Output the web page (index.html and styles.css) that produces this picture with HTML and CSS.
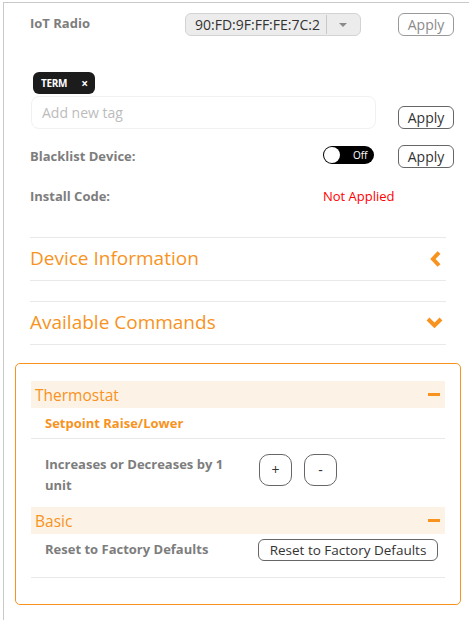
FILE: index.html
```html
<!DOCTYPE html>
<html lang="en">
<head>
<meta charset="UTF-8">
<title>Device Settings</title>
<link rel="stylesheet" href="styles.css">
</head>
<body>
<div class="panel">
  <div class="settings">
    <div class="field-row row-radio">
      <div class="field-label">IoT Radio</div>
      <div class="select">
        <span class="select-text">90:FD:9F:FF:FE:7C:2</span>
        <span class="select-caret"></span>
      </div>
      <button class="btn btn-disabled">Apply</button>
    </div>

    <div class="tags">
      <span class="tag">TERM <span class="tag-x">&#215;</span></span>
    </div>
    <div class="tag-row">
      <input class="tag-input" type="text" placeholder="Add new tag">
      <button class="btn btn-tag">Apply</button>
    </div>

    <div class="field-row row-blacklist">
      <div class="field-label label-wide">Blacklist Device:</div>
      <div class="toggle">
        <span class="knob"></span>
        <span class="toggle-text">Off</span>
      </div>
      <button class="btn">Apply</button>
    </div>

    <div class="field-row row-install">
      <div class="field-label label-wide">Install Code:</div>
      <div class="status-bad">Not Applied</div>
    </div>

    <div class="section section-first">
      <span>Device Information</span>
      <svg class="chev" width="14" height="18" viewBox="0 0 14 18">
        <polyline points="10,2.5 4,9 10,15.5" fill="none" stroke="#f7931e" stroke-width="4"/>
      </svg>
    </div>
    <div class="section">
      <span>Available Commands</span>
      <svg class="chev" width="17" height="14" viewBox="0 0 17 14">
        <polyline points="2,3 8.5,9.5 15,3" fill="none" stroke="#f7931e" stroke-width="4"/>
      </svg>
    </div>
  </div>

  <div class="commands">
    <div class="group-head">
      <span>Thermostat</span>
      <span class="minus"></span>
    </div>
    <div class="cmd-title">Setpoint Raise/Lower</div>
    <div class="cmd-row cmd-setpoint">
      <div class="cmd-label"><span class="cmd-text">Increases or Decreases by 1 unit</span></div>
      <button class="btn btn-round">+</button>
      <button class="btn btn-round">-</button>
    </div>

    <div class="group-head">
      <span>Basic</span>
      <span class="minus"></span>
    </div>
    <div class="cmd-row cmd-reset">
      <div class="cmd-label">Reset to Factory Defaults</div>
      <button class="btn btn-reset">Reset to Factory Defaults</button>
    </div>
  </div>
</div>
</body>
</html>
```

FILE: styles.css
```css
body {
  margin: 0;
  font-family: "Open Sans", Arial, sans-serif;
  color: #333;
  background: #fff;
  overflow: hidden;
}
.panel {
  margin: 2px 0 0 3px;
  border-top: 1px solid #c9c9c9;
  border-left: 1px solid #c9c9c9;
  padding-left: 11px;
  min-height: 640px;
}
.settings {
  width: 424px;
  padding-left: 15px;
}
.field-row {
  display: flex;
  align-items: flex-start;
}
.field-label {
  width: 155px;
  flex-shrink: 0;
  font-size: 13px;
  font-weight: bold;
  color: #7d7d7d;
  line-height: 20px;
}
.label-wide {
  width: 293px;
}
.row-radio {
  margin-top: 10px;
  height: 24px;
}
.select {
  width: 176px;
  height: 23px;
  box-sizing: border-box;
  margin-right: 37px;
  background: #ececec;
  border: 1px solid #d3d3d3;
  border-radius: 6px;
  display: flex;
  align-items: center;
}
.select-text {
  width: 131px;
  padding-left: 9px;
  white-space: nowrap;
  font-size: 14px;
  color: #333;
  border-right: 1px solid #c8c8c8;
  line-height: 19px;
}
.select-caret {
  margin-left: 12px;
  width: 0;
  height: 0;
  border-left: 4px solid transparent;
  border-right: 4px solid transparent;
  border-top: 4px solid #8a8a8a;
}
.btn {
  font-family: "Open Sans", Arial, sans-serif;
  width: 56px;
  height: 23px;
  padding: 0;
  font-size: 14px;
  line-height: 20px;
  color: #333;
  background: #fff;
  border: 1px solid #666;
  border-radius: 6px;
}
.btn-disabled {
  color: #8a8a8a;
  border-color: #9a9a9a;
}
.tags {
  margin-top: 33px;
  height: 22px;
}
.tag {
  display: inline-flex;
  align-items: center;
  margin-left: 3px;
  width: 62px;
  height: 22px;
  box-sizing: border-box;
  padding-left: 8px;
  background: #1c1c1c;
  color: #fff;
  border-radius: 6px;
  font-size: 10px;
  font-weight: bold;
  letter-spacing: -0.3px;
}
.tag-x {
  margin-left: 14px;
  font-size: 12px;
}
.tag-row {
  display: flex;
  align-items: flex-start;
  margin-top: 4px;
}
.tag-input {
  margin-left: 1px;
  width: 345px;
  height: 33px;
  box-sizing: border-box;
  padding-left: 10px;
  border: 1px solid #f1f1f1;
  border-radius: 8px;
  font-family: "Open Sans", Arial, sans-serif;
  font-size: 14px;
  outline: none;
}
.tag-input::placeholder {
  color: #bcbcbc;
}
.btn-tag {
  margin-top: 10px;
  margin-left: 22px;
}
.row-blacklist {
  margin-top: 16px;
  height: 23px;
}
.row-blacklist .field-label {
  line-height: 23px;
}
.toggle {
  margin-top: 1px;
  margin-right: 24px;
  width: 51px;
  height: 18px;
  box-sizing: border-box;
  background: #000;
  border-radius: 9px;
  display: flex;
  align-items: center;
  padding-left: 1px;
}
.knob {
  width: 16px;
  height: 16px;
  border-radius: 50%;
  background: #fff;
}
.toggle-text {
  margin-left: 13px;
  color: #fff;
  font-size: 10px;
}
.row-install {
  margin-top: 17px;
  height: 22px;
}
.row-install .field-label {
  line-height: 22px;
}
.status-bad {
  color: #ff0000;
  font-size: 13px;
  line-height: 22px;
}
.section {
  width: 416px;
  height: 44px;
  box-sizing: border-box;
  border-top: 1px solid #e9e9e9;
  border-bottom: 1px solid #e9e9e9;
  display: flex;
  align-items: center;
  justify-content: space-between;
  padding-right: 3px;
  font-size: 19px;
  color: #f7931e;
  margin-top: 20px;
}
.section span {
  margin-top: -2px;
}
.section-first {
  margin-top: 30px;
}
.commands {
  margin-top: 18px;
  width: 446px;
  box-sizing: border-box;
  border: 1px solid #f7931e;
  border-radius: 5px;
  padding: 17px 15px 26px 15px;
}
.group-head {
  height: 27px;
  background: #fdf2e6;
  display: flex;
  align-items: center;
  justify-content: space-between;
  padding: 0 5px 0 4px;
  font-size: 15.5px;
  color: #f7931e;
}
.minus {
  width: 12px;
  height: 3px;
  background: #f7931e;
}
.cmd-title {
  height: 30px;
  line-height: 30px;
  border-bottom: 1px solid #e9e9e9;
  padding-left: 14px;
  font-size: 13px;
  font-weight: bold;
  color: #f7931e;
}
.cmd-row {
  display: flex;
  align-items: flex-start;
}
.cmd-label {
  width: 214px;
  flex-shrink: 0;
  padding-left: 14px;
  font-size: 13px;
  font-weight: bold;
  color: #7d7d7d;
}
.cmd-text {
  display: block;
  width: 195px;
  line-height: 21px;
}
.cmd-setpoint {
  padding-top: 15px;
  height: 53px;
}
.btn-round {
  width: 33px;
  height: 32px;
  border-radius: 10px;
  margin-right: 12px;
  font-size: 14px;
}
.cmd-reset {
  height: 43px;
  border-bottom: 1px solid #e9e9e9;
}
.cmd-reset .cmd-label {
  width: 213px;
  margin-top: 4px;
  line-height: 22px;
}
.btn-reset {
  margin-top: 5px;
  width: 180px;
  height: 22px;
  font-size: 13.5px;
  line-height: 18px;
}
```
